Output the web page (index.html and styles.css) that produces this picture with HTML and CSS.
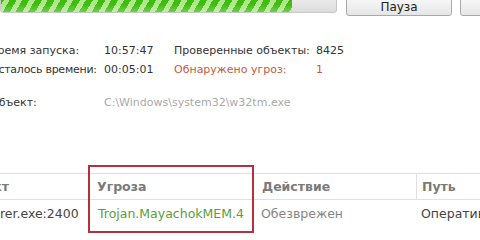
FILE: index.html
```html
<!DOCTYPE html>
<html>
<head>
<meta charset="utf-8">
<link rel="stylesheet" href="styles.css">
</head>
<body>
<div class="page">
  <div class="topbar">
    <div class="progress"><div class="fill" style="width:87%"></div></div>
    <div class="btn">Пауза</div>
    <div class="btn btn-cut">Стоп</div>
  </div>

  <div class="info">
    <span class="lbl">Время запуска:</span><span class="val">10:57:47</span><span class="lbl">Проверенные объекты:</span><span class="val">8425</span>
    <span class="lbl">Осталось времени:</span><span class="val">00:05:01</span><span class="lbl warn">Обнаружено угроз:</span><span class="val warn">1</span>
  </div>

  <div class="obj">
    <span class="lbl">Объект:</span><span class="path">C:\Windows\system32\w32tm.exe</span>
  </div>

  <div class="table">
    <div class="th">Объект</div>
    <div class="th">Угроза</div>
    <div class="th">Действие</div>
    <div class="th">Путь</div>
    <div class="td first">explorer.exe:2400</div>
    <div class="td threat">Trojan.MayachokMEM.4</div>
    <div class="td muted">Обезврежен</div>
    <div class="td">Оперативная память</div>
    <div class="highlight"></div>
  </div>
</div>
</body>
</html>
```

FILE: styles.css
```css
html, body {
  margin: 0;
  padding: 0;
  background: #fff;
  overflow: hidden;
}
body {
  width: 480px;
  height: 240px;
  font-family: "DejaVu Sans", Verdana, sans-serif;
  font-size: 11px;
  color: #333;
}
.page {
  width: 480px;
  height: 240px;
  overflow: hidden;
}
.topbar {
  display: flex;
  align-items: flex-end;
  margin-top: -8px;
  height: 24px;
}
.progress {
  width: 337px;
  height: 21px;
  box-sizing: border-box;
  border: 1px solid #c8c8c8;
  border-radius: 3px;
  background: linear-gradient(#f2f2f2, #dcdcdc);
  overflow: hidden;
  margin-bottom: 3px;
  flex: none;
}
.fill {
  height: 100%;
  background:
    linear-gradient(rgba(255,255,255,0) 60%, rgba(255,255,255,0.25)),
    repeating-linear-gradient(120deg, #3fbc12 0 6px, #aee888 6px 11px);
}
.btn {
  flex: none;
  margin-left: 9px;
  width: 106px;
  height: 24px;
  box-sizing: border-box;
  border: 1px solid #a8a8a8;
  border-radius: 3px;
  background: linear-gradient(#fdfdfd, #e6e6e6);
  display: flex;
  align-items: center;
  justify-content: center;
  padding-top: 6px;
  font-size: 12px;
  color: #222;
}
.btn-cut {
  margin-left: 8px;
  color: transparent;
}
.info {
  display: grid;
  grid-template-columns: 114px 70px 142px auto;
  row-gap: 6px;
  margin-left: -10px;
  margin-top: 28px;
  line-height: 13px;
}
.lbl { white-space: nowrap; }
.info .lbl:nth-child(5) { letter-spacing: -0.25px; }
.warn { color: #c75a3c; }
.obj {
  display: grid;
  grid-template-columns: 114px auto;
  margin-left: -10px;
  margin-top: 20px;
  line-height: 13px;
}
.path { color: #a9a9a9; }
.table {
  position: relative;
  display: grid;
  grid-template-columns: 138px 165px 163px 120px;
  margin-left: -50px;
  margin-top: 64px;
  border-top: 1px solid #e0e0e0;
  width: 586px;
  font-size: 12.5px;
}
.th {
  height: 26px;
  box-sizing: border-box;
  border-bottom: 1px solid #e0e0e0;
  border-left: 1px solid #e0e0e0;
  padding-left: 8px;
  display: flex;
  align-items: center;
  font-weight: bold;
  color: #7a7a7a;
  white-space: nowrap;
}
.th:first-child { border-left: none; padding-left: 6px; }
.th:nth-child(4) { padding-left: 5px; }
.td {
  height: 26px;
  padding-left: 8px;
  display: flex;
  align-items: center;
  white-space: nowrap;
  color: #444;
}
.td.first { padding-left: 16px; }
.td:nth-child(8) { padding-left: 5px; }
.threat { color: #5d9c3c; padding-left: 10px; }
.muted { color: #858585; }
.highlight {
  position: absolute;
  left: 138px;
  top: -9px;
  width: 166px;
  height: 68px;
  box-sizing: border-box;
  border: 2px solid #b3303f;
}
```
